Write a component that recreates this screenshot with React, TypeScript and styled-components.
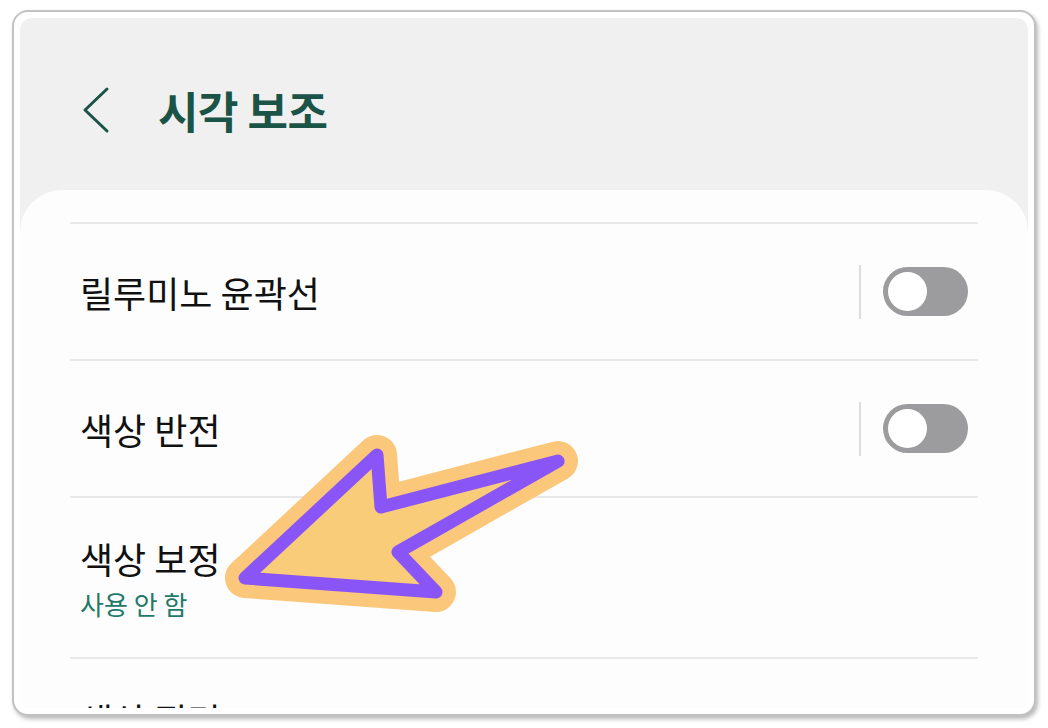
import React from "react";
import styled, { createGlobalStyle } from "styled-components";

const GlobalStyle = createGlobalStyle`
  html, body {
    margin: 0;
    padding: 0;
    background: #ffffff;
  }
  body {
    font-family: "Noto Sans CJK KR", "Noto Sans", sans-serif;
  }
`;

const Page = styled.div`
  position: relative;
  width: 1048px;
  height: 728px;
  padding: 10px 0 0 12px;
  box-sizing: border-box;
`;

const Frame = styled.div`
  width: 1024px;
  height: 706px;
  box-sizing: border-box;
  border: 2px solid #c2c2c2;
  border-radius: 16px;
  box-shadow: 2px 3px 4px rgba(0, 0, 0, 0.28);
  background: #ffffff;
  padding: 6px;
`;

const Screen = styled.div`
  height: 100%;
  border-radius: 12px;
  background: #f0f0f0;
  display: flex;
  flex-direction: column;
  overflow: hidden;
`;

const Header = styled.div`
  height: 172px;
  flex-shrink: 0;
  display: flex;
  align-items: center;
  box-sizing: border-box;
  padding: 12px 0 0 60px;
`;

const BackButton = styled.div`
  width: 78px;
  height: 50px;
  display: flex;
  align-items: center;
`;

const Title = styled.h1`
  margin: 0;
  font-size: 44px;
  line-height: 56px;
  font-weight: 700;
  color: #1b5446;
  letter-spacing: -0.5px;
`;

const Card = styled.div`
  flex: 1;
  background: #fdfdfd;
  border-radius: 42px 42px 0 0;
  padding: 32px 50px 0;
`;

const Row = styled.div<{ $height?: number; $top?: number }>`
  border-top: 2px solid #e8e8e8;
  box-sizing: border-box;
  height: ${(p) => (p.$height ? `${p.$height}px` : "auto")};
  padding: ${(p) => (p.$top ? `${p.$top}px` : "0")} 10px 0;
  display: flex;
  align-items: ${(p) => (p.$top ? "flex-start" : "center")};
`;

const TextBlock = styled.div`
  flex: 1;
  display: flex;
  flex-direction: column;
`;

const Label = styled.div`
  font-size: 36px;
  line-height: 46px;
  color: #111111;
`;

const Sub = styled.div`
  font-size: 26px;
  line-height: 34px;
  margin-top: 6px;
  color: #22796a;
`;

const Divider = styled.div`
  width: 2px;
  height: 54px;
  background: #dddddd;
  margin-right: 22px;
`;

const Toggle = styled.div`
  width: 85px;
  height: 49px;
  border-radius: 25px;
  background: #9c9c9e;
  display: flex;
  align-items: center;
  padding-left: 5px;
  box-sizing: border-box;
`;

const Knob = styled.div`
  width: 39px;
  height: 39px;
  border-radius: 50%;
  background: #ffffff;
`;

const Overlay = styled.svg`
  position: absolute;
  left: 0;
  top: 0;
  pointer-events: none;
`;

const arrow = "377,455 381,507 558,461 398,552 436,592 245,578";

function Switch() {
  return (
    <>
      <Divider />
      <Toggle>
        <Knob />
      </Toggle>
    </>
  );
}

export default function App() {
  return (
    <Page>
      <GlobalStyle />
      <Frame>
        <Screen>
          <Header>
            <BackButton>
              <svg width="30" height="50" viewBox="0 0 30 50">
                <path
                  d="M27 4 L5 25 L27 46"
                  fill="none"
                  stroke="#1b5446"
                  strokeWidth="3"
                  strokeLinecap="round"
                  strokeLinejoin="round"
                />
              </svg>
            </BackButton>
            <Title>시각 보조</Title>
          </Header>
          <Card>
            <Row $height={137}>
              <TextBlock>
                <Label>릴루미노 윤곽선</Label>
              </TextBlock>
              <Switch />
            </Row>
            <Row $height={137}>
              <TextBlock>
                <Label>색상 반전</Label>
              </TextBlock>
              <Switch />
            </Row>
            <Row $height={161}>
              <TextBlock>
                <Label>색상 보정</Label>
                <Sub>사용 안 함</Sub>
              </TextBlock>
            </Row>
            <Row $top={37}>
              <TextBlock>
                <Label>색상 필터</Label>
              </TextBlock>
            </Row>
          </Card>
        </Screen>
      </Frame>
      <Overlay width="1048" height="728" viewBox="0 0 1048 728">
        <polygon
          points={arrow}
          fill="#fbc77b"
          stroke="#fbc77b"
          strokeWidth="40"
          strokeLinejoin="round"
        />
        <polygon
          points={arrow}
          fill="#f8cc78"
          stroke="#8a55f6"
          strokeWidth="13"
          strokeLinejoin="round"
        />
      </Overlay>
    </Page>
  );
}
